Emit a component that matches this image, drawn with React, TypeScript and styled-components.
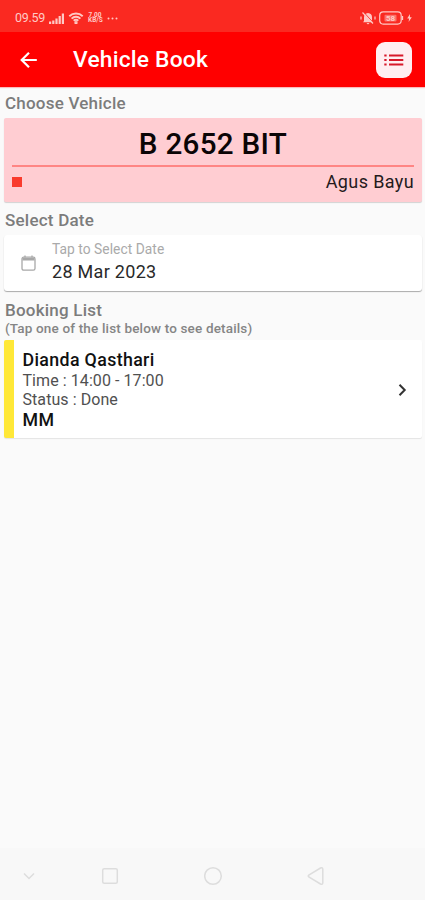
import React from "react";
import styled, { createGlobalStyle } from "styled-components";

const Global = createGlobalStyle`
  * { box-sizing: border-box; }
  body { margin: 0; background: #fafafa; font-family: Roboto, sans-serif; }
  svg { display: block; flex: none; }
`;

const Screen = styled.div`
  width: 425px;
  height: 900px;
  display: flex;
  flex-direction: column;
  background: #fafafa;
  overflow: hidden;
`;

const StatusBar = styled.div`
  height: 32px;
  flex: none;
  padding: 4px 13px 0 15px;
  display: flex;
  align-items: center;
  justify-content: space-between;
  background: #fa2921;
  color: #ffc9c5;
`;

const StatusGroup = styled.div<{ $gap: number }>`
  display: flex;
  align-items: center;
  gap: ${(p) => p.$gap}px;
`;

const Clock = styled.span`
  font-size: 12.5px;
  line-height: 14px;
  letter-spacing: -0.3px;
  width: 30px;
  white-space: nowrap;
`;

const Speed = styled.span`
  font-size: 6.5px;
  line-height: 5.5px;
  font-weight: 700;
  text-align: center;
  width: 14px;
`;

const AppBar = styled.header`
  height: 55px;
  flex: none;
  padding: 0 13px 0 17px;
  display: flex;
  align-items: center;
  background: #ff0000;
  box-shadow: 0 1px 1px rgba(255, 0, 0, 0.25);
  color: #fff;
`;

const IconButton = styled.button`
  border: 0;
  padding: 0;
  background: none;
  color: inherit;
`;

const Title = styled.h1`
  margin: 0 0 0 32px;
  flex: 1;
  font-size: 22.8px;
  line-height: 28px;
  font-weight: 500;
  letter-spacing: 0.2px;
`;

const ListButton = styled(IconButton)`
  width: 36px;
  height: 36px;
  display: grid;
  place-items: center;
  border-radius: 9px;
  background: #ffeef1;
  color: #d8182a;
`;

const Content = styled.main`
  flex: 1;
  padding: 6px 3px 0 4px;
  display: flex;
  flex-direction: column;
`;

const Label = styled.h2`
  margin: 0;
  padding-left: 1px;
  font-size: 17px;
  line-height: 20px;
  font-weight: 500;
  letter-spacing: 0.22px;
  color: #7c7c7c;
`;

const Hint = styled.p`
  margin: 0;
  padding-left: 1px;
  font-size: 13.5px;
  line-height: 16px;
  font-weight: 500;
  letter-spacing: 0.16px;
  color: #858585;
`;

const VehicleCard = styled.section`
  height: 84px;
  margin: 5px 0 8px;
  padding: 7px 8px 0;
  border-radius: 2px;
  background: #ffcdd2;
  box-shadow: 0 1px 1px rgba(0, 0, 0, 0.16);
`;

const Plate = styled.div`
  height: 42px;
  border-bottom: 2px solid #ff8584;
  text-align: center;
  font-size: 29.6px;
  line-height: 38px;
  font-weight: 500;
  letter-spacing: 0.3px;
  color: #0b0506;
`;

const DriverRow = styled.div`
  height: 30px;
  display: flex;
  align-items: center;
  justify-content: space-between;
  font-size: 18px;
  line-height: 20px;
  letter-spacing: 0.38px;
  color: #241a1c;
`;

const Marker = styled.span`
  width: 10px;
  height: 10px;
  background: #f93b2d;
`;

const DateCard = styled.section`
  height: 56px;
  margin: 5px 0 9px;
  padding-left: 16px;
  display: flex;
  align-items: center;
  gap: 15px;
  border-radius: 3px;
  background: #fff;
  box-shadow: 0 1px 1px rgba(0, 0, 0, 0.32);
  color: #a8a8a8;
`;

const DateText = styled.div`
  padding-bottom: 4px;
`;

const DateHint = styled.div`
  font-size: 13.8px;
  line-height: 20px;
  letter-spacing: 0.04px;
  color: #aaa;
`;

const DateValue = styled.div`
  font-size: 18px;
  line-height: 25px;
  letter-spacing: 0.3px;
  color: #292929;
`;

const BookingCard = styled.section`
  height: 98px;
  margin-top: 4px;
  padding: 9px 14px 0 8.5px;
  display: flex;
  justify-content: space-between;
  border-left: 10px solid #ffe838;
  border-radius: 2px;
  background: #fff;
  box-shadow: 0 1px 1px rgba(0, 0, 0, 0.09);
`;

const BookingText = styled.div<{ $strong?: boolean }>`
  font-size: ${(p) => (p.$strong ? 17.8 : 16)}px;
  line-height: ${(p) => (p.$strong ? 22 : 19)}px;
  font-weight: ${(p) => (p.$strong ? 500 : 400)};
  letter-spacing: ${(p) => (p.$strong ? 0.35 : 0.07)}px;
  color: ${(p) => (p.$strong ? "#111" : "#505050")};
`;

const Chevron = styled.svg`
  align-self: center;
  margin-top: -8px;
`;

const NavBar = styled.nav`
  height: 52px;
  flex: none;
  padding: 4px 0 0 21px;
  display: grid;
  grid-template-columns: 80px 103px 103px 18px;
  align-items: center;
  background: #f8f8f8;
`;

const navStroke = { fill: "none", stroke: "#dddddd", strokeWidth: 1.5 };

export default function App() {
  return (
    <Screen>
      <Global />
      <StatusBar>
        <StatusGroup $gap={4}>
          <Clock>09.59</Clock>
          <svg width="15" height="11" viewBox="0 0 15 11" fill="currentColor">
            <path d="M0 8.500h2.200V11H0zM3.200 7.500h2.200V11H3.200zM6.400 5.500h2.200V11H6.400zM9.600 3h2.200v8H9.600zM12.800 .5H15V11h-2.200z" />
          </svg>
          <svg width="16" height="12" viewBox="0 0 15 12" fill="none" stroke="currentColor" strokeWidth="1.900">
            <path d="M.8 4.200a9.600 9.600 0 0 1 13.400 0M3.100 6.600a6.300 6.300 0 0 1 8.800 0M5.200 8.800a3.400 3.400 0 0 1 4.600 0" />
            <circle cx="7.500" cy="10.700" r=".7" />
          </svg>
          <Speed>7.00 KB/S</Speed>
          <svg width="13" height="3" viewBox="0 0 13 3" fill="currentColor">
            <circle cx="2.500" cy="1.500" r="1" /><circle cx="6.500" cy="1.500" r="1" /><circle cx="10.500" cy="1.500" r="1" />
          </svg>
        </StatusGroup>
        <StatusGroup $gap={3}>
          <svg width="16" height="14" viewBox="0 0 16 14" fill="currentColor">
            <path d="M4 10V6.200Q4 2.500 8 2q4 .5 4 4.200V10l1 1.200H3zM6.500 12h3L8 13.400z" />
            <path d="M4 1.500l10 11" stroke="#fa2921" strokeWidth="1" />
            <path d="M2.500 1.500l10.500 11M1 5.500v3M15 5.500v3" stroke="currentColor" strokeWidth="1.200" />
          </svg>
          <svg width="25" height="14" viewBox="0 0 25 14">
            <rect x=".7" y=".9" width="21.500" height="12.200" rx="3.500" fill="none" stroke="currentColor" strokeWidth="1.200" />
            <path d="M23.500 5v4" stroke="currentColor" strokeWidth="1.300" />
            <rect x="5.500" y="3.800" width="12" height="6.600" rx="1" fill="currentColor" opacity=".45" />
            <text x="11.500" y="10" textAnchor="middle" fontSize="8" fontWeight="700" fontFamily="Roboto" fill="currentColor">58</text>
          </svg>
          <svg width="5" height="8" viewBox="0 0 5 8" fill="currentColor"><path d="M3 0L.2 4.600h1.900L1.600 8l3.200-4.700H2.900z" /></svg>
        </StatusGroup>
      </StatusBar>

      <AppBar>
        <IconButton aria-label="Back">
          <svg width="24" height="24" viewBox="0 0 24 24" fill="none" stroke="currentColor" strokeWidth="2.200">
            <path d="M19.800 12H5M12 4.700L4.700 12l7.300 7.300" />
          </svg>
        </IconButton>
        <Title>Vehicle Book</Title>
        <ListButton aria-label="Bookings">
          <svg width="20" height="12" viewBox="0 0 20 12" stroke="currentColor" strokeWidth="1.900">
            <path d="M.3 1.500h2.300M5 1.500h14.300M.3 6h2.300M5 6h14.300M.3 10.500h2.300M5 10.500h14.300" />
          </svg>
        </ListButton>
      </AppBar>

      <Content>
        <Label>Choose Vehicle</Label>
        <VehicleCard>
          <Plate>B 2652 BIT</Plate>
          <DriverRow><Marker /><span>Agus Bayu</span></DriverRow>
        </VehicleCard>

        <Label>Select Date</Label>
        <DateCard>
          <svg width="17" height="18" viewBox="0 0 17 18" fill="none" stroke="currentColor" strokeWidth="1.300">
            <rect x="2" y="3.200" width="13" height="13" rx="1.700" />
            <path d="M2.500 4.600h12M2.500 5.800h12M5 1.500v2M12 1.500v2" />
          </svg>
          <DateText>
            <DateHint>Tap to Select Date</DateHint>
            <DateValue>28 Mar 2023</DateValue>
          </DateText>
        </DateCard>

        <Label>Booking List</Label>
        <Hint>(Tap one of the list below to see details)</Hint>
        <BookingCard>
          <div>
            <BookingText $strong>Dianda Qasthari</BookingText>
            <BookingText>Time : 14:00 - 17:00</BookingText>
            <BookingText>Status : Done</BookingText>
            <BookingText $strong>MM</BookingText>
          </div>
          <Chevron width="12" height="14" viewBox="0 0 12 14" fill="none" stroke="#333" strokeWidth="2">
            <path d="M3.500 1.800L8.700 7l-5.200 5.200" />
          </Chevron>
        </BookingCard>
      </Content>

      <NavBar>
        <svg width="16" height="16" viewBox="0 0 16 16" {...navStroke}><path d="M3 5.500l5 5 5-5" /></svg>
        <svg width="18" height="18" viewBox="0 0 18 18" {...navStroke}><rect x="1.700" y="1.700" width="14.600" height="14.600" rx="1.500" /></svg>
        <svg width="20" height="20" viewBox="0 0 20 20" {...navStroke}><circle cx="9" cy="10" r="8.300" /></svg>
        <svg width="18" height="20" viewBox="0 0 18 20" {...navStroke}><path d="M1.800 9q-1 1 0 2l11.700 7q2.300 1 2.300-1.300V3.300Q15.800 1 13.500 2z" /></svg>
      </NavBar>
    </Screen>
  );
}
